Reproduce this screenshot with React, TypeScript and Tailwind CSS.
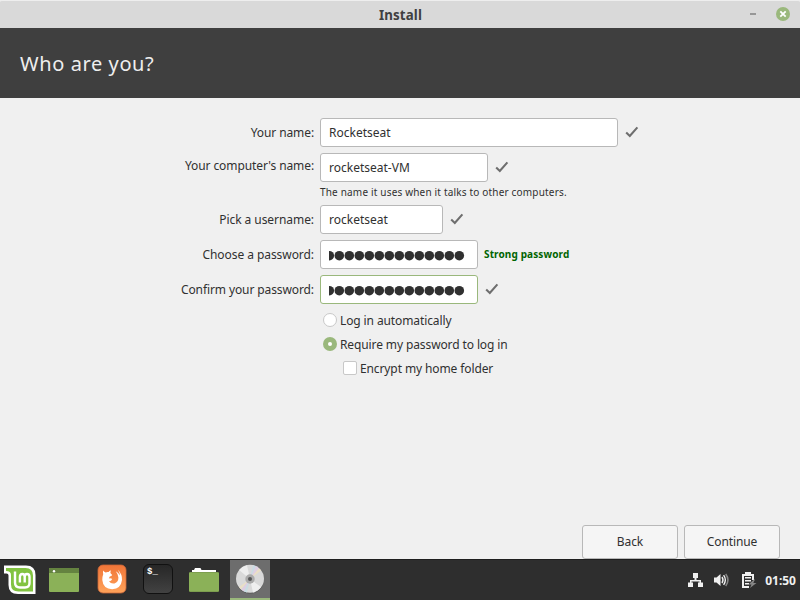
import React from 'react';

function Check() {
  return (
    <svg width="14" height="12" viewBox="0 0 14 12" className="mb-px ml-[7px] shrink-0">
      <path d="M1.2 6.6 L4.8 10 L12.4 1.4" fill="none" stroke="#6e6e6e" strokeWidth="2.1" />
    </svg>
  );
}

function Row({ label, labelClass = '', children }: { label: string; labelClass?: string; children: React.ReactNode }) {
  return (
    <div className="flex h-[29px] items-center">
      <div className={'w-[314px] shrink-0 text-right ' + (labelClass || 'tracking-[-0.06px]')}>{label}</div>
      <div className="ml-1.5 flex items-center">{children}</div>
    </div>
  );
}

function Field({ size, focused = false, children }: { size: string; focused?: boolean; children: React.ReactNode }) {
  return (
    <div
      className={
        'flex h-[29px] items-center overflow-hidden rounded-[3px] border bg-white px-2 text-[#303030] ' +
        (focused ? 'border-[#9ab87c] ' : 'border-[#b8b8b8] ') +
        size
      }
    >
      {children}
    </div>
  );
}

function Dots() {
  return (
    <svg width="136" height="11" viewBox="0 0 136 11" className="mt-0.5" fill="#303030">
      {Array.from({ length: 14 }, (_, i) => (
        <circle key={i} cx={0.3 + i * 10} cy="5.7" r="4.8" />
      ))}
    </svg>
  );
}

function MintLogo() {
  return (
    <svg width="34" height="32" viewBox="0 0 34 32">
      <path d="M1 1.5 H23 Q32.5 1.5 32.5 11 V30 H15 Q5.5 30 5.5 21 V11.5 Q5.5 9.5 3.5 9.5 H1 Z" fill="#fff" />
      <path d="M3 4 H22.5 Q30 4 30 11.5 V27.5 H15.5 Q8 27.5 8 20.5 V11 Q8 7 3 7 Z" fill="#82c341" />
      <path
        d="M12 7.5 V18.5 Q12 23.5 17 23.5 H22 Q26.5 23.5 26.5 19 V13 Q26.5 10 24 10 Q21.7 10 21.7 13 V18.5 M21.7 13 Q21.7 10 19.3 10 Q16.9 10 16.9 13 V18.5"
        fill="none"
        stroke="#fff"
        strokeWidth="2.4"
      />
    </svg>
  );
}

function Desktop() {
  return (
    <svg width="30" height="24" viewBox="0 0 30 24">
      <rect width="30" height="24" rx="1" fill="#8bb158" />
      <path d="M0 1 Q0 0 1 0 H29 Q30 0 30 1 V5 H0Z" fill="#658340" />
      <circle cx="5" cy="3.2" r="1.2" fill="#fff" />
    </svg>
  );
}

function Firefox() {
  return (
    <svg width="30" height="30" viewBox="0 0 30 30">
      <defs>
        <linearGradient id="fox" x1="0" y1="0" x2="0" y2="1">
          <stop offset="0" stopColor="#f07538" />
          <stop offset="1" stopColor="#ffa35a" />
        </linearGradient>
      </defs>
      <rect x="1" y="1" width="28" height="28" rx="5" fill="url(#fox)" stroke="#cc6738" strokeWidth=".8" />
      <path
        d="M6.2 6.5 Q7.2 8 8.6 8.4 Q10.4 7.8 11.6 8.1 Q12.4 6.8 13.8 6.3 L13.4 9 L15.2 11 Q14.6 12.4 12.8 12.6 L11.8 14.4 Q14 14 15.2 14.9 Q14.4 17.1 12 17.2 Q14 20.2 17.5 19.4 Q21.5 18 21.4 13.6 Q21.2 10 18.8 7.2 Q21.6 8.6 22.8 11.6 Q22.8 8.6 20.9 5.8 Q25.3 10.2 25 16 Q24 24.8 15.2 25.2 Q6 24.8 5.3 16 Q5.2 12.8 6.2 10.2 Q5.7 8.3 6.2 6.5Z"
        fill="#fff"
      />
    </svg>
  );
}

function Terminal() {
  return (
    <div className="h-[30px] w-[30px] rounded-[6px] border border-[#111] bg-linear-to-b from-[#272727] to-[#424242] pl-[3px] pt-[3px] font-['Liberation_Mono',monospace] text-[9px] font-bold leading-[8px] text-white">
      $_
    </div>
  );
}

function Files() {
  return (
    <svg width="30" height="25" viewBox="0 0 30 25">
      <path d="M3 6 V3 H5 L6 1 H11.5 L12.5 3 H27 V6Z" fill="#fff" />
      <rect y="5" width="30" height="20" rx="1.2" fill="#78994c" />
      <rect y="5.8" width="30" height="18.4" rx="1" fill="#8bb158" />
    </svg>
  );
}

function Disc() {
  return (
    <svg width="30" height="30" viewBox="0 0 30 30">
      <circle cx="15" cy="15.6" r="14" fill="#555" />
      <circle cx="15" cy="14.8" r="14" fill="#d9d9d9" />
      <path d="M15 15 L4 6 A14 14 0 0 1 12 1.2Z" fill="#eeeeee" />
      <path d="M15 15 L26 23 A14 14 0 0 1 18 28.6Z" fill="#efefef" />
      <path d="M15 15 L18 1.2 A14 14 0 0 1 21 2.3Z" fill="#cadbe4" />
      <path d="M15 15 L21 2.3 A14 14 0 0 1 24 4.2Z" fill="#dfcfe2" />
      <path d="M15 15 L24 4.2 A14 14 0 0 1 26 6.5Z" fill="#eadfc6" />
      <path d="M15 15 L4 23 A14 14 0 0 0 6.2 25.5Z" fill="#e9dfc7" />
      <path d="M15 15 L6.2 25.5 A14 14 0 0 0 9 27.4Z" fill="#ddcee2" />
      <path d="M15 15 L9 27.4 A14 14 0 0 0 12 28.4Z" fill="#c8dce2" />
      <circle cx="15" cy="15" r="4.7" fill="#aaa" />
      <circle cx="15" cy="15" r="2" fill="#555" />
    </svg>
  );
}

function NetworkIcon() {
  return (
    <svg width="16" height="16" viewBox="0 0 16 16" fill="#f0f0f0">
      <path d="M5 1h5v5H8.5v2H13v2.5h2V15h-5v-4.500h1.500V9.500H3.500v1H5V15H0v-4.500h2V8h4.500V6H5z" />
    </svg>
  );
}

function Volume() {
  return (
    <svg width="16" height="16" viewBox="0 0 16 16" fill="none">
      <path d="M0 5.5H2.5L6.5 2V14L2.5 10.5H0Z" fill="#f0f0f0" />
      <path d="M8 5 Q10 8 8 11 M9.6 3.2 Q13.1 8 9.6 12.8" stroke="#f0f0f0" strokeWidth="1.4" />
      <path d="M11.7 2 Q16.2 8 11.7 14" stroke="#868686" strokeWidth="1.5" />
    </svg>
  );
}

function Battery() {
  return (
    <svg width="16" height="16" viewBox="0 0 16 16">
      <path d="M4 0H10V2H13V8H11V4H3V14H8V16H1V2H4Z" fill="#f0f0f0" />
      <path d="M4 5H10V6.5H4ZM4 8H10V9.5H4ZM4 11H8V12.5H4Z" fill="#f0f0f0" />
      <path d="M13 7.5L7.5 12.5H10.5L9 16L15.5 11H12.3L14 7.5Z" fill="#858585" />
    </svg>
  );
}

export default function App() {
  return (
    <div className="flex h-[600px] w-[800px] flex-col overflow-hidden bg-[#f0f0f0] font-['Noto_Sans',sans-serif] text-[12px] leading-4 text-[#303030]">
      <header className="grid h-7 shrink-0 grid-cols-[1fr_auto_1fr] items-center rounded-t-[2px] border-t border-[#eeeeee] bg-[#d9d9d9]">
        <span />
        <h1 className="pl-px text-[13.33px] font-bold tracking-[0.1px] text-[#404040]">Install</h1>
        <div className="flex items-center justify-end gap-5 pb-0.5 pr-2.5">
          <span className="h-0.5 w-1.5 bg-[#979797]" />
          <svg width="14" height="14" viewBox="0 0 14 14">
            <circle cx="7" cy="7" r="7" fill="#9ab87c" />
            <path d="M4.3 4.3 L9.7 9.7 M9.7 4.3 L4.3 9.7" stroke="#fff" strokeWidth="1.8" />
          </svg>
        </div>
      </header>
      <div className="flex h-[70px] shrink-0 items-center bg-[#3f3f3f] pl-5 pt-0.5 text-[20px] leading-7 tracking-[0.6px] text-[#eeeeee]">
        <h2>Who are you?</h2>
      </div>
      <main className="flex grow flex-col pt-5">
        <Row label="Your name:" labelClass="tracking-[-0.1px]">
          <Field size="w-[298px]">Rocketseat</Field>
          <Check />
        </Row>
        <div className="h-1.5" />
        <Row label="Your computer's name:" labelClass="pb-1 tracking-[-0.1px]">
          <Field size="w-[168px]">rocketseat-VM</Field>
          <Check />
        </Row>
        <p className="ml-80 h-[23px] pt-0.5 text-[10px] tracking-[0.18px]">The name it uses when it talks to other computers.</p>
        <Row label="Pick a username:">
          <Field size="w-[123px]">rocketseat</Field>
          <Check />
        </Row>
        <div className="h-1.5" />
        <Row label="Choose a password:">
          <Field size="w-[158px]"><Dots /></Field>
          <span className="ml-1.5 pb-0.5 text-[10px] font-bold tracking-[0.12px] text-[#006400]">Strong password</span>
        </Row>
        <div className="h-1.5" />
        <Row label="Confirm your password:" labelClass="tracking-[-0.1px]">
          <Field size="w-[158px]" focused><Dots /></Field>
          <Check />
        </Row>
        <div className="ml-[323px] mt-1 flex flex-col tracking-[-0.11px]">
          <div className="flex h-6 items-center gap-[3px]">
            <span className="h-3.5 w-3.5 rounded-full border border-[#c8c8c8] bg-white" />
            <span className="pt-0.5">Log in automatically</span>
          </div>
          <div className="flex h-6 items-center gap-[3px]">
            <span className="flex h-3.5 w-3.5 items-center justify-center rounded-full bg-[#9ab87c]">
              <span className="h-1 w-1 rounded-full bg-white" />
            </span>
            <span className="pt-0.5">Require my password to log in</span>
          </div>
          <div className="ml-5 flex h-6 items-center gap-[3px]">
            <span className="h-3.5 w-3.5 rounded-[2px] border border-[#c8c8c8] bg-white" />
            <span className="pt-0.5">Encrypt my home folder</span>
          </div>
        </div>
        <div className="mt-auto flex justify-end gap-1.5 pr-5 tracking-[-0.1px]">
          <button className="h-[34px] w-24 rounded-[3px] border border-[#b8b8b8] bg-[#f5f5f5]">Back</button>
          <button className="h-[34px] w-24 rounded-[3px] border border-[#b8b8b8] bg-[#f5f5f5]">Continue</button>
        </div>
      </main>
      <footer className="flex h-[41px] shrink-0 items-stretch border-t border-[#1e1e1e] bg-[#2e2e2e]">
        <div className="flex w-10 items-center justify-center"><MintLogo /></div>
        <div className="flex w-12 items-center justify-center"><Desktop /></div>
        <div className="flex w-12 items-center justify-center pb-0.5"><Firefox /></div>
        <div className="flex w-11 items-center justify-center pb-0.5"><Terminal /></div>
        <div className="flex w-12 items-center justify-center pb-0.5"><Files /></div>
        <div className="ml-0.5 flex w-10 items-center justify-center border-b-2 border-[#9ab87c] bg-[#6d6d6d]"><Disc /></div>
        <div className="ml-auto flex items-center pr-1 text-[#f0f0f0]">
          <NetworkIcon />
          <span className="ml-2.5"><Volume /></span>
          <span className="ml-[11px]"><Battery /></span>
          <span className="ml-2 pt-0.5 font-bold">01:50</span>
        </div>
      </footer>
    </div>
  );
}
